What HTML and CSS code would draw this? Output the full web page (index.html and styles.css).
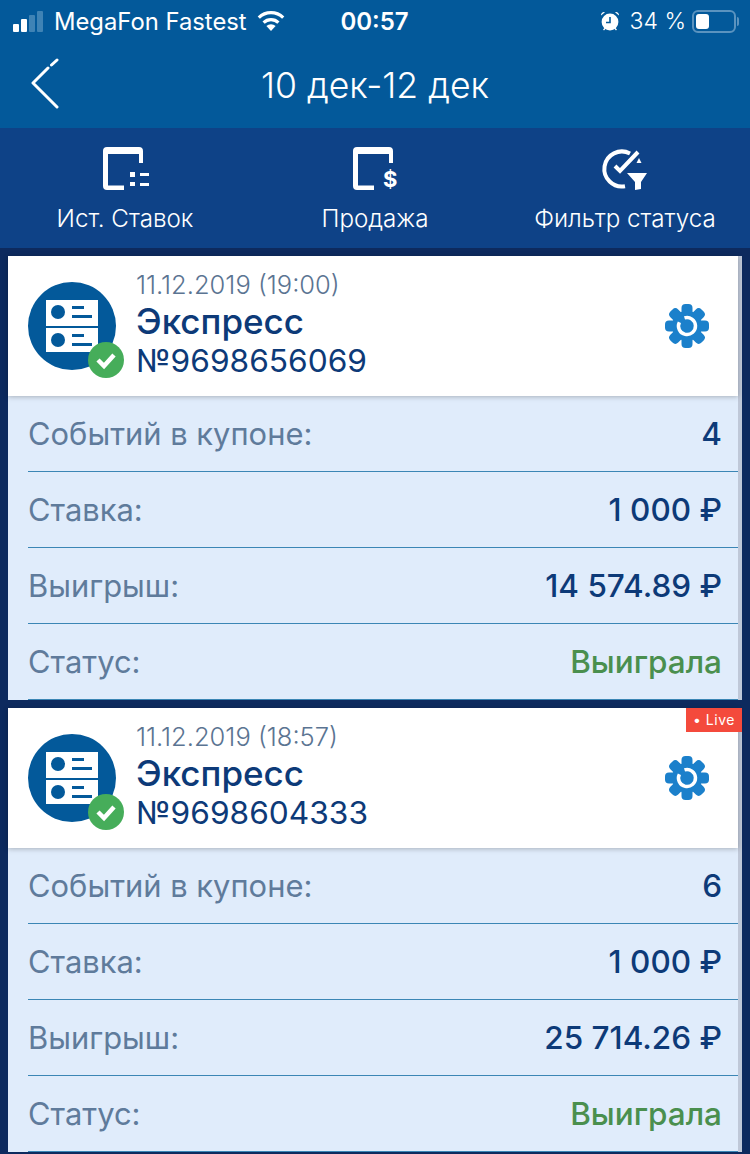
FILE: index.html
```html
<!DOCTYPE html>
<html>
<head>
    <title>Ист. Ставок</title>
    <link rel="stylesheet" href="styles.css">
</head>
<body>
    <div class="top">
        <div class="status">
            <div class="status-left">
                <span class="signal"><i></i><i></i><i class="off"></i><i class="off"></i></span>
                <span>MegaFon Fastest</span>
                <svg class="wifi" width="30" height="22" viewBox="0 0 30 22">
                    <path d="M15 21l-4.6-5a6.6 6.6 0 0 1 9.2 0z" fill="#fff"/>
                    <path d="M7.6 12.6a10.6 10.6 0 0 1 14.8 0" fill="none" stroke="#fff" stroke-width="3.2"/>
                    <path d="M2.8 7.6a17.4 17.4 0 0 1 24.4 0" fill="none" stroke="#fff" stroke-width="3.2"/>
                </svg>
            </div>
            <div class="time">00:57</div>
            <div class="status-right">
                <svg class="alarm" width="20" height="22" viewBox="0 0 20 22">
                    <circle cx="10" cy="12" r="8.4" fill="#fff"/>
                    <path d="M10 7v5.5h-4" fill="none" stroke="#03599a" stroke-width="1.6"/>
                    <path d="M1 5.5a3 3 0 0 1 4-3.2zM19 5.5a3 3 0 0 0-4-3.2z" fill="#fff"/>
                    <path d="M3.5 20l2-2M16.5 20l-2-2" stroke="#fff" stroke-width="1.4"/>
                </svg>
                <span>34 %</span>
                <span class="battery"><i></i></span>
            </div>
        </div>
        <div class="nav">
            <svg class="back" width="30" height="52" viewBox="0 0 30 52">
                <path d="M27 49L3 25L18 10M21.500 7L27 2" fill="none" stroke="#fff" stroke-width="3" stroke-linecap="round" stroke-linejoin="round"/>
            </svg>
            <div class="title">10 дек-12 дек</div>
        </div>
    </div>

    <div class="tabs">
        <div class="tab">
            <svg width="48" height="46" viewBox="0 0 48 46">
                <path d="M23 45H6a4 4 0 0 1-4-4V6a4 4 0 0 1 4-4h32a4 4 0 0 1 4 4v12h-4V9H7v31.500h16z" fill="#fff"/>
                <path d="M29 27h5v5h-5zM29 37h5v4h-5zM39 28h9v3h-9zM39 38h9v3h-9z" fill="#fff"/>
            </svg>
            <span>Ист. Ставок</span>
        </div>
        <div class="tab">
            <svg width="48" height="46" viewBox="0 0 48 46">
                <path d="M23 45H6a4 4 0 0 1-4-4V6a4 4 0 0 1 4-4h32a4 4 0 0 1 4 4v12h-4V9H7v31.500h16z" fill="#fff"/>
                <text x="32" y="42" class="dollar">$</text>
            </svg>
            <span>Продажа</span>
        </div>
        <div class="tab">
            <svg width="48" height="46" viewBox="0 0 48 46">
                <path d="M29 8.500A17.500 17.500 0 1 0 24 41.200" fill="none" stroke="#fff" stroke-width="4"/>
                <path d="M14 21l5 5L37 7" fill="none" stroke="#fff" stroke-width="4"/>
                <path d="M38 13l2.500 5h-5z" fill="#fff"/>
                <path d="M26 28h20l-6 9v7l-6 1v-8z" fill="#fff"/>
            </svg>
            <span>Фильтр статуса</span>
        </div>
    </div>

    <div class="list">
        <div class="card">
            <div class="card-head">
                <svg class="coupon-icon" width="108" height="96" viewBox="0 0 108 96">
                    <circle cx="44" cy="44" r="44" fill="#03599a"/>
                    <path d="M18 18h52v26H18zM18 46h52v24H18z" fill="#fff"/>
                    <circle cx="30" cy="30" r="7" fill="#03599a"/>
                    <circle cx="30" cy="58" r="7" fill="#03599a"/>
                    <path d="M44 24h12v3H44zM44 33h20v3H44zM44 52h12v3H44zM44 61h20v3H44z" fill="#03599a"/>
                    <circle cx="78" cy="78" r="18" fill="#46ad5a"/>
                    <path d="M70 78l6 6 10-11" fill="none" stroke="#fff" stroke-width="4.500"/>
                </svg>
                <div class="coupon-text">
                    <div class="date">11.12.2019 (19:00)</div>
                    <div class="name">Экспресс</div>
                    <div class="number">№9698656069</div>
                </div>
                <svg class="gear" width="44" height="44" viewBox="0 0 44 44">
                    <g fill="#1b80cb">
                        <circle cx="22" cy="22" r="15"/>
                        <rect x="16.500" width="11" height="44" rx="4"/>
                        <rect x="16.500" width="11" height="44" rx="4" transform="rotate(45 22 22)"/>
                        <rect x="16.500" width="11" height="44" rx="4" transform="rotate(90 22 22)"/>
                        <rect x="16.500" width="11" height="44" rx="4" transform="rotate(135 22 22)"/>
                    </g>
                    <path d="M19.500 13.900a8.500 8.500 0 1 1-5.100 4.300" fill="none" stroke="#fff" stroke-width="3.500"/>
                </svg>
            </div>
            <div class="row"><span class="label">Событий в купоне:</span><span class="value">4</span></div>
            <div class="row"><span class="label">Ставка:</span><span class="value">1 000 ₽</span></div>
            <div class="row"><span class="label">Выигрыш:</span><span class="value">14 574.89 ₽</span></div>
            <div class="row"><span class="label">Статус:</span><span class="value won">Выиграла</span></div>
        </div>

        <div class="card">
            <div class="live">• Live</div>
            <div class="card-head">
                <svg class="coupon-icon" width="108" height="96" viewBox="0 0 108 96">
                    <circle cx="44" cy="44" r="44" fill="#03599a"/>
                    <path d="M18 18h52v26H18zM18 46h52v24H18z" fill="#fff"/>
                    <circle cx="30" cy="30" r="7" fill="#03599a"/>
                    <circle cx="30" cy="58" r="7" fill="#03599a"/>
                    <path d="M44 24h12v3H44zM44 33h20v3H44zM44 52h12v3H44zM44 61h20v3H44z" fill="#03599a"/>
                    <circle cx="78" cy="78" r="18" fill="#46ad5a"/>
                    <path d="M70 78l6 6 10-11" fill="none" stroke="#fff" stroke-width="4.500"/>
                </svg>
                <div class="coupon-text">
                    <div class="date">11.12.2019 (18:57)</div>
                    <div class="name">Экспресс</div>
                    <div class="number">№9698604333</div>
                </div>
                <svg class="gear" width="44" height="44" viewBox="0 0 44 44">
                    <g fill="#1b80cb">
                        <circle cx="22" cy="22" r="15"/>
                        <rect x="16.500" width="11" height="44" rx="4"/>
                        <rect x="16.500" width="11" height="44" rx="4" transform="rotate(45 22 22)"/>
                        <rect x="16.500" width="11" height="44" rx="4" transform="rotate(90 22 22)"/>
                        <rect x="16.500" width="11" height="44" rx="4" transform="rotate(135 22 22)"/>
                    </g>
                    <path d="M19.500 13.900a8.500 8.500 0 1 1-5.100 4.300" fill="none" stroke="#fff" stroke-width="3.500"/>
                </svg>
            </div>
            <div class="row"><span class="label">Событий в купоне:</span><span class="value">6</span></div>
            <div class="row"><span class="label">Ставка:</span><span class="value">1 000 ₽</span></div>
            <div class="row"><span class="label">Выигрыш:</span><span class="value">25 714.26 ₽</span></div>
            <div class="row"><span class="label">Статус:</span><span class="value won">Выиграла</span></div>
        </div>
    </div>
</body>
</html>
```

FILE: styles.css
```css
html, body {
    height: 1154px;
    overflow: hidden;
}

body {
    margin: 0;
    background-color: #0d2a5e;
    font-family: Inter, "Noto Sans", sans-serif;
    color: #fff;
}

.top {
    height: 128px;
    background-color: #03599a;
}

.status {
    height: 42px;
    padding: 0 14px 0 13px;
    display: grid;
    grid-template-columns: 1fr auto 1fr;
    align-items: center;
    font-size: 23.8px;
}

.status-left,
.status-right {
    display: flex;
    align-items: center;
}

.status-left {
    gap: 11px;
}

.wifi {
    margin-left: -2px;
}

.status-right {
    justify-content: flex-end;
    gap: 6px;
    font-size: 23px;
    font-weight: 300;
}

.alarm {
    margin-right: 4px;
}

.time {
    font-size: 24px;
    font-weight: 600;
}

.signal {
    display: flex;
    align-items: flex-end;
    gap: 2px;
    height: 21px;
}

.signal i {
    width: 6px;
    background-color: #fff;
    border-radius: 1px;
}

.signal i:nth-child(1) { height: 8px; }
.signal i:nth-child(2) { height: 13px; }
.signal i:nth-child(3) { height: 17px; }
.signal i:nth-child(4) { height: 21px; }

.signal i.off {
    background-color: #3f83b5;
}

.battery {
    position: relative;
    box-sizing: border-box;
    width: 44px;
    height: 23px;
    border: 2px solid #5b93bf;
    border-radius: 6px;
    padding: 2px;
    display: flex;
}

.battery::after {
    content: "";
    position: absolute;
    right: -5px;
    top: 5px;
    width: 2px;
    height: 9px;
    background-color: #5b93bf;
    border-radius: 0 2px 2px 0;
}

.battery i {
    width: 13px;
    background-color: #fff;
    border-radius: 3px;
}

.nav {
    height: 86px;
    display: flex;
    align-items: center;
    justify-content: center;
    position: relative;
}

.back {
    position: absolute;
    left: 30px;
    top: 16px;
}

.title {
    font-size: 35.6px;
    font-weight: 300;
}

.tabs {
    height: 120px;
    background-color: #0e4287;
    display: grid;
    grid-template-columns: repeat(3, 1fr);
}

.tab {
    display: flex;
    flex-direction: column;
    align-items: center;
    padding-top: 17px;
    gap: 13px;
    font-size: 24.2px;
    font-weight: 300;
}

.dollar {
    fill: #fff;
    font-size: 22px;
    font-weight: 700;
}

.list {
    padding: 8px 8px 0;
    display: flex;
    flex-direction: column;
    gap: 8px;
}

.card {
    position: relative;
    background-color: #e0ecfb;
    border-right: 4px solid rgba(60, 60, 80, 0.2);
}

.card-head {
    height: 140px;
    box-sizing: border-box;
    padding: 26px 29px 0 20px;
    background-color: #fff;
    box-shadow: 0 1px 5px rgba(0, 0, 0, 0.25);
    display: flex;
    position: relative;
}

.coupon-text {
    flex: 1;
    margin-top: -11px;
    color: #0d3a78;
}

.date {
    font-size: 25.500px;
    font-weight: 300;
    color: #5b7492;
    line-height: 28px;
}

.name {
    font-size: 35px;
    font-weight: 500;
    line-height: 44px;
}

.number {
    font-size: 31.700px;
    line-height: 36px;
}

.gear {
    margin-top: 22px;
}

.row {
    height: 76px;
    box-sizing: border-box;
    margin-left: 20px;
    padding-right: 16px;
    border-bottom: 1px solid #3b86b5;
    display: flex;
    align-items: center;
    justify-content: space-between;
    font-size: 30.900px;
}

.label {
    color: #5f7b9b;
}

.value {
    font-size: 31.500px;
    font-weight: 500;
    color: #0d3a78;
}

.value.won {
    color: #4a8f4e;
}

.live {
    position: absolute;
    top: 0;
    right: -4px;
    z-index: 1;
    width: 56px;
    height: 24px;
    background-color: #f44a3c;
    font-size: 14px;
    line-height: 24px;
    text-align: center;
    letter-spacing: 0.5px;
}
```
